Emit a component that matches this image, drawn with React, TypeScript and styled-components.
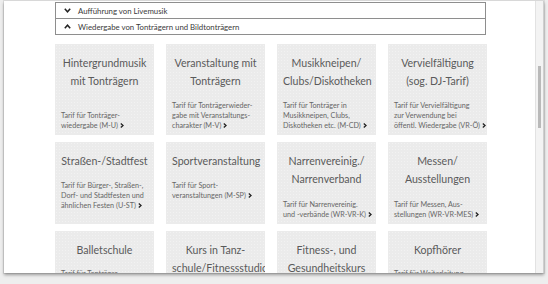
import React from 'react'
import styled, { createGlobalStyle } from 'styled-components'

const GlobalStyle = createGlobalStyle`
  html, body {
    margin: 0;
    background: #eeeeee;
    font-family: Lato, "Noto Sans", sans-serif;
  }
`

const Page = styled.div`
  height: 284px;
  padding: 1px 4px 0;
  box-sizing: border-box;
`

const Window = styled.div`
  display: flex;
  width: 540px;
  height: 272px;
  background: #fff;
  box-shadow: 0 2px 3px rgba(0, 0, 0, 0.35), 0 0 0 1px #dcdcdc;
`

const Content = styled.div`
  flex: 1;
  overflow: hidden;
  padding: 1px 49px 0 51px;
`

const Scrollbar = styled.div`
  width: 7px;
  background: #f3f3f3;
  border-left: 1px solid #e2e2e2;
  border-right: 1px solid #cfcfcf;
`

const Thumb = styled.div`
  width: 3px;
  height: 62px;
  margin: 65px 0 0 2px;
  background: #b9b9b9;
`

const Accordion = styled.div`
  border: 1px solid #8e8e8e;
`

const AccRow = styled.div`
  display: flex;
  align-items: center;
  gap: 7px;
  height: 15px;
  padding-left: 8px;
  font-size: 7.8px;
  color: #3a3a3a;

  & + & {
    border-top: 1px solid #8e8e8e;
  }
`

const Grid = styled.div`
  display: grid;
  grid-template-columns: repeat(4, 99px);
  column-gap: 12px;
  row-gap: 7px;
  margin-top: 9px;
`

const Card = styled.div`
  display: flex;
  flex-direction: column;
  padding: 10px 6px 4px;
  overflow: hidden;
  background-color: #ebebeb;
  background-image: radial-gradient(#f2f2f2 0.6px, transparent 0.8px);
  background-size: 3px 3px;
`

const Title = styled.div`
  text-align: center;
  font-size: 10.6px;
  line-height: 18.3px;
  color: #5a5a5a;
  white-space: nowrap;
`

const Desc = styled.div<{ $gap: number }>`
  margin-top: ${(p) => p.$gap}px;
  font-size: 7.2px;
  line-height: 10px;
  color: #666;
  white-space: nowrap;
`

const Chevron = ({ up }: { up?: boolean }) => (
  <svg width="7" height="5" viewBox="0 0 7 5">
    <polyline
      points={up ? '0.8,4.2 3.5,1.2 6.2,4.2' : '0.8,0.8 3.5,3.8 6.2,0.8'}
      fill="none"
      stroke="#222"
      strokeWidth="1.5"
    />
  </svg>
)

const Arrow = () => (
  <svg width="4" height="5" viewBox="0 0 4 5" style={{ marginLeft: 2 }}>
    <polyline points="0.8,0.6 3,2.5 0.8,4.4" fill="none" stroke="#222" strokeWidth="1.3" />
  </svg>
)

const cards: { title: string[]; desc: string[]; gap: number }[] = [
  { title: ['Hintergrundmusik', 'mit Tonträgern'], desc: ['Tarif für Tonträger-', 'wiedergabe (M-U)'], gap: 20 },
  { title: ['Veranstaltung mit', 'Tonträgern'], desc: ['Tarif für Tonträgerwieder-', 'gabe mit Veranstaltungs-', 'charakter (M-V)'], gap: 10 },
  { title: ['Musikkneipen/', 'Clubs/Diskotheken'], desc: ['Tarif für Tonträger in', 'Musikkneipen, Clubs,', 'Diskotheken etc. (M-CD)'], gap: 10 },
  { title: ['Vervielfältigung', '(sog. DJ-Tarif)'], desc: ['Tarif für Vervielfältigung', 'zur Verwendung bei', 'öffentl. Wiedergabe (VR-Ö)'], gap: 10 },
  { title: ['Straßen-/Stadtfest'], desc: ['Tarif für Bürger-, Straßen-,', 'Dorf- und Stadtfesten und', 'ähnlichen Festen (U-ST)'], gap: 11.5 },
  { title: ['Sportveranstaltung'], desc: ['Tarif für Sport-', 'veranstaltungen (M-SP)'], gap: 11.5 },
  { title: ['Narrenvereinig./', 'Narrenverband'], desc: ['Tarif für Narrenvereinig.', 'und -verbände (WR-VR-K)'], gap: 11.5 },
  { title: ['Messen/', 'Ausstellungen'], desc: ['Tarif für Messen, Aus-', 'stellungen (WR-VR-MES)'], gap: 11.5 },
  { title: ['Balletschule'], desc: ['Tarif für Tonträger-', 'wiedergabe in Ballet-'], gap: 10 },
  { title: ['Kurs in Tanz-', 'schule/Fitnessstudio'], desc: ['Tarif für Tonträger-', 'wiedergabe in Kursen'], gap: 10 },
  { title: ['Fitness-, und', 'Gesundheitskurs'], desc: ['Tarif für Tonträger-', 'wiedergabe in Kursen'], gap: 10 },
  { title: ['Kopfhörer'], desc: ['Tarif für Weiterleitung', 'über Kopfhörer'], gap: 10 },
]

export default function App() {
  return (
    <Page>
      <GlobalStyle />
      <Window>
        <Content>
          <Accordion>
            <AccRow>
              <Chevron />
              Aufführung von Livemusik
            </AccRow>
            <AccRow>
              <Chevron up />
              Wiedergabe von Tonträgern und Bildtonträgern
            </AccRow>
          </Accordion>

          <Grid>
            {cards.map(({ title, desc, gap }) => (
              <Card key={title.join(' ')}>
                <Title>
                  {title.map((line) => (
                    <div key={line}>{line}</div>
                  ))}
                </Title>
                <Desc $gap={gap}>
                  {desc.map((line, i) => (
                    <div key={line}>
                      {line}
                      {i === desc.length - 1 && <Arrow />}
                    </div>
                  ))}
                </Desc>
              </Card>
            ))}
          </Grid>
        </Content>
        <Scrollbar>
          <Thumb />
        </Scrollbar>
      </Window>
    </Page>
  )
}
